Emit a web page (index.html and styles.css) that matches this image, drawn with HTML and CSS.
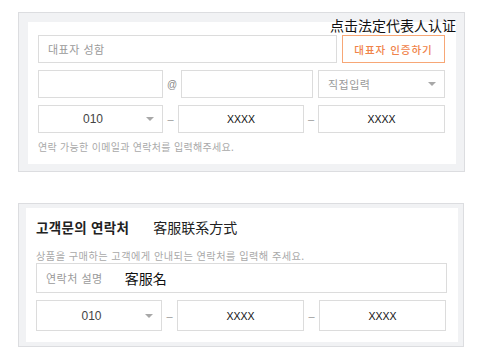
FILE: index.html
```html
<!DOCTYPE html>
<html lang="ko">
<head>
    <meta charset="UTF-8">
    <meta name="viewport" content="width=device-width, initial-scale=1.0">
    <title>연락처</title>
    <link rel="stylesheet" href="styles.css">
</head>
<body>
    <div class="panel panel-owner">
        <span class="note">点击法定代表人认证</span>
        <div class="panel-inner owner-inner">
            <div class="row row-name">
                <div class="field"><span class="placeholder">대표자 성함</span></div>
                <button class="verify-button">대표자 인증하기</button>
            </div>

            <div class="row row-mail">
                <div class="field"></div>
                <span class="joiner at">@</span>
                <div class="field"></div>
                <div class="field select select-left"><span class="placeholder">직접입력</span><i class="caret"></i></div>
            </div>

            <div class="row row-phone">
                <div class="field select"><span class="value">010</span><i class="caret"></i></div>
                <span class="joiner">–</span>
                <div class="field center"><span class="value">XXXX</span></div>
                <span class="joiner">–</span>
                <div class="field center"><span class="value">XXXX</span></div>
            </div>

            <p class="hint">연락 가능한 이메일과 연락처를 입력해주세요.</p>
        </div>
    </div>

    <div class="panel panel-contact">
        <div class="panel-inner contact-inner">
            <h2 class="title">고객문의 연락처 <span class="title-cn">客服联系方式</span></h2>
            <p class="hint hint-top">상품을 구매하는 고객에게 안내되는 연락처를 입력해 주세요.</p>

            <div class="field field-desc">
                <span class="placeholder">연락처 설명</span>
                <span class="desc-value">客服名</span>
            </div>

            <div class="row row-phone row-phone-2">
                <div class="field select"><span class="value">010</span><i class="caret"></i></div>
                <span class="joiner">–</span>
                <div class="field center"><span class="value">XXXX</span></div>
                <span class="joiner">–</span>
                <div class="field center"><span class="value">XXXX</span></div>
            </div>
        </div>
    </div>
</body>
</html>
```

FILE: styles.css
```css
* {
    margin: 0;
    padding: 0;
    box-sizing: border-box;
}

body {
    font-family: "Noto Sans CJK KR", "Noto Sans CJK SC", sans-serif;
    background: #ffffff;
    color: #222;
    width: 489px;
    height: 361px;
    overflow: hidden;
}

/* outer grey frame */
.panel {
    position: relative;
    margin-left: 18px;
    border: 1px solid #dcdde0;
    background: #f1f2f4;
}

.panel-owner {
    margin-top: 12px;
    width: 447px;
    padding: 9px 8px 7px 9px;
}

.panel-contact {
    margin-top: 31px;
    width: 446px;
    padding: 4px 5px 4px 7px;
}

.panel-inner {
    background: #ffffff;
}

.owner-inner {
    height: 142px;
    padding: 13px 11px 0 10px;
}

.contact-inner {
    height: 134px;
    padding: 9px 11px 0 10px;
}

/* chinese annotation over the top right corner */
.note {
    position: absolute;
    top: 2px;
    right: 8px;
    font-family: "Noto Sans CJK SC", sans-serif;
    font-size: 14px;
    line-height: 20px;
    color: #111;
}

.row {
    display: grid;
    align-items: stretch;
    height: 28px;
    margin-bottom: 7px;
}

.row-name {
    grid-template-columns: 299px 103px;
    column-gap: 5px;
}

.row-mail {
    grid-template-columns: 125px 18px 132px 132px;
}

.row-mail .select {
    margin-left: 5px;
}

.row-phone {
    grid-template-columns: 125px 15px 126px 14px 127px;
}

.row-phone-2 {
    height: 31px;
    margin-bottom: 0;
    grid-template-columns: 126px 15px 127px 15px 127px;
}

.field {
    position: relative;
    display: flex;
    align-items: center;
    border: 1px solid #dcdcdc;
    background: #fff;
    padding: 0 9px;
    font-size: 11px;
}

.placeholder {
    color: #9a9a9a;
    letter-spacing: 0.5px;
}

.value {
    font-family: "Liberation Sans", sans-serif;
    font-size: 10.5px;
    color: #111;
}

.center {
    justify-content: center;
}

.select {
    justify-content: center;
    padding-right: 24px;
}

.select-left {
    justify-content: flex-start;
}

.select .value {
    color: #444;
    font-size: 12px;
}

.caret {
    position: absolute;
    right: 8px;
    top: 50%;
    margin-top: -2px;
    width: 0;
    height: 0;
    border-left: 4.5px solid transparent;
    border-right: 4.5px solid transparent;
    border-top: 4.5px solid #a8a8a8;
}

.joiner {
    display: flex;
    align-items: center;
    justify-content: center;
    color: #999;
    font-family: "Liberation Sans", sans-serif;
    font-size: 11px;
}

.at {
    font-size: 10px;
    color: #888;
}

.verify-button {
    border: 1px solid #f7a776;
    background: #fff;
    color: #f0834a;
    font-family: "Noto Sans CJK KR", sans-serif;
    font-size: 10.5px;
    font-weight: 500;
    letter-spacing: 1px;
}

.hint {
    font-size: 10px;
    line-height: 14px;
    color: #a9a9a9;
    letter-spacing: 0.3px;
}

.title {
    font-size: 13.5px;
    line-height: 20px;
    font-weight: 700;
    color: #222;
    letter-spacing: 0.3px;
}

.title-cn {
    font-family: "Noto Sans CJK SC", sans-serif;
    font-size: 14px;
    font-weight: 400;
    margin-left: 20px;
    letter-spacing: 0;
}

.hint-top {
    margin-top: 12px;
    font-size: 10.2px;
    letter-spacing: 0.45px;
}

.field-desc {
    height: 30px;
    margin-bottom: 7px;
    justify-content: flex-start;
}

.desc-value {
    margin-left: 22px;
    font-family: "Noto Sans CJK SC", sans-serif;
    font-size: 14px;
    color: #111;
}
```
